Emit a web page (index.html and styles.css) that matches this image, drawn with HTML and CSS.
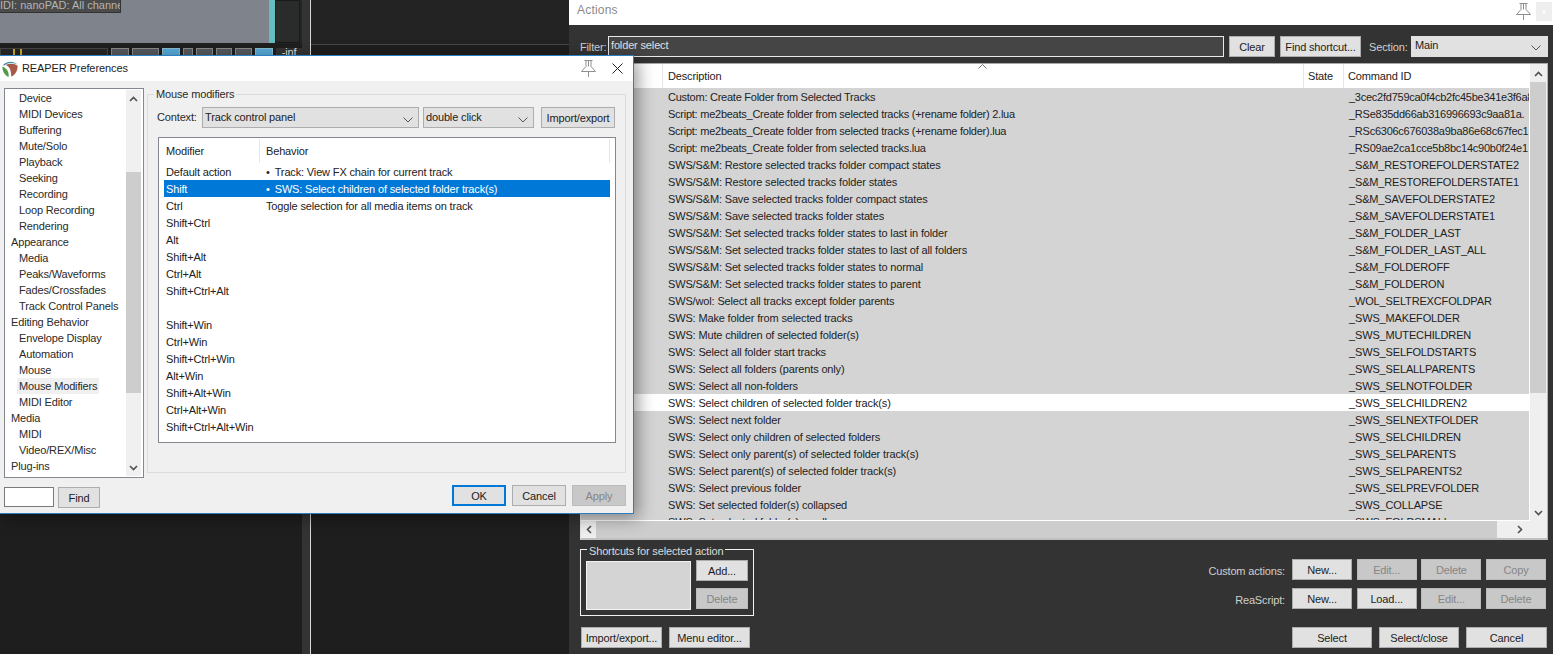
FILE: index.html
```html
<!DOCTYPE html>
<html lang="en">
<head>
<meta charset="utf-8">
<title>REAPER</title>
<link rel="stylesheet" href="styles.css">
</head>
<body>
<div class="daw">
  <div class="daw-left">
    <div class="track">
      <div class="track-lane"><span class="track-label">IDI: nanoPAD: All channe</span></div>
      <div class="track-teal"></div>
      <div class="track-meter"></div>
    </div>
    <div class="track-controls">
      <div class="tc-name"><i></i><i></i></div>
      <div class="tc-btn w17"></div>
      <div class="tc-btn w27"></div>
      <div class="tc-btn w17 blue"></div>
      <div class="tc-btn w11"></div>
      <div class="tc-btn w18"></div>
      <div class="tc-btn w18"></div>
      <div class="tc-btn w18"></div>
      <div class="tc-btn w17 blue"></div>
      <div class="tc-inf">-inf</div>
    </div>
  </div>
  <div class="daw-stripe"></div>
  <div class="daw-right"><div class="daw-top"></div></div>
</div>

<section class="actions">
  <header class="actions-title">
    <span>Actions</span>
    <svg class="pin" viewBox="0 0 15 17"><path d="M3.5 .5H11.5M5 .5V6.5M10 .5V6.5M7.5 .5V6.5M5 6.5L.5 11.5H14.5L10 6.5M7.5 11.5V17"/></svg>
    <div class="actions-close"><svg viewBox="0 0 6 6"><path d="M1 1L5 5M5 1L1 5"/></svg></div>
  </header>
  <div class="filter-row">
    <label class="lbl filter-lbl">Filter:</label>
    <div class="filter-input">folder select</div>
    <button class="btn clear">Clear</button>
    <button class="btn find-sc">Find shortcut...</button>
    <label class="lbl section-lbl">Section:</label>
    <div class="section-select"><span>Main</span><svg class="chev" viewBox="0 0 10 6"><path d="M.5 .5L5 5L9.5 .5"/></svg></div>
  </div>
  <div class="list">
    <div class="list-main">
      <div class="list-head">
        <div class="col-a"></div>
        <div class="col-b">Description<svg class="sort" viewBox="0 0 9 5"><path d="M.5 4.5L4.5 .5L8.5 4.5"/></svg></div>
        <div class="col-c">State</div>
        <div class="col-d">Command ID</div>
      </div>
      <div class="list-body">
        <div class="row tight"><div></div><div>Custom: Create Folder from Selected Tracks</div><div></div><div>_3cec2fd759ca0f4cb2fc45be341e3f6a8</div></div>
        <div class="row tight"><div></div><div>Script: me2beats_Create folder from selected tracks (+rename folder) 2.lua</div><div></div><div>_RSe835dd66ab316996693c9aa81a.</div></div>
        <div class="row tight"><div></div><div>Script: me2beats_Create folder from selected tracks (+rename folder).lua</div><div></div><div>_RSc6306c676038a9ba86e68c67fec1</div></div>
        <div class="row tight"><div></div><div>Script: me2beats_Create folder from selected tracks.lua</div><div></div><div>_RS09ae2ca1cce5b8bc14c90b0f24e1</div></div>
        <div class="row"><div></div><div>SWS/S&amp;M: Restore selected tracks folder compact states</div><div></div><div>_S&amp;M_RESTOREFOLDERSTATE2</div></div>
        <div class="row"><div></div><div>SWS/S&amp;M: Restore selected tracks folder states</div><div></div><div>_S&amp;M_RESTOREFOLDERSTATE1</div></div>
        <div class="row"><div></div><div>SWS/S&amp;M: Save selected tracks folder compact states</div><div></div><div>_S&amp;M_SAVEFOLDERSTATE2</div></div>
        <div class="row"><div></div><div>SWS/S&amp;M: Save selected tracks folder states</div><div></div><div>_S&amp;M_SAVEFOLDERSTATE1</div></div>
        <div class="row"><div></div><div>SWS/S&amp;M: Set selected tracks folder states to last in folder</div><div></div><div>_S&amp;M_FOLDER_LAST</div></div>
        <div class="row"><div></div><div>SWS/S&amp;M: Set selected tracks folder states to last of all folders</div><div></div><div>_S&amp;M_FOLDER_LAST_ALL</div></div>
        <div class="row"><div></div><div>SWS/S&amp;M: Set selected tracks folder states to normal</div><div></div><div>_S&amp;M_FOLDEROFF</div></div>
        <div class="row"><div></div><div>SWS/S&amp;M: Set selected tracks folder states to parent</div><div></div><div>_S&amp;M_FOLDERON</div></div>
        <div class="row"><div></div><div>SWS/wol: Select all tracks except folder parents</div><div></div><div>_WOL_SELTREXCFOLDPAR</div></div>
        <div class="row"><div></div><div>SWS: Make folder from selected tracks</div><div></div><div>_SWS_MAKEFOLDER</div></div>
        <div class="row"><div></div><div>SWS: Mute children of selected folder(s)</div><div></div><div>_SWS_MUTECHILDREN</div></div>
        <div class="row"><div></div><div>SWS: Select all folder start tracks</div><div></div><div>_SWS_SELFOLDSTARTS</div></div>
        <div class="row"><div></div><div>SWS: Select all folders (parents only)</div><div></div><div>_SWS_SELALLPARENTS</div></div>
        <div class="row"><div></div><div>SWS: Select all non-folders</div><div></div><div>_SWS_SELNOTFOLDER</div></div>
        <div class="row sel"><div></div><div>SWS: Select children of selected folder track(s)</div><div></div><div>_SWS_SELCHILDREN2</div></div>
        <div class="row"><div></div><div>SWS: Select next folder</div><div></div><div>_SWS_SELNEXTFOLDER</div></div>
        <div class="row"><div></div><div>SWS: Select only children of selected folders</div><div></div><div>_SWS_SELCHILDREN</div></div>
        <div class="row"><div></div><div>SWS: Select only parent(s) of selected folder track(s)</div><div></div><div>_SWS_SELPARENTS</div></div>
        <div class="row"><div></div><div>SWS: Select parent(s) of selected folder track(s)</div><div></div><div>_SWS_SELPARENTS2</div></div>
        <div class="row"><div></div><div>SWS: Select previous folder</div><div></div><div>_SWS_SELPREVFOLDER</div></div>
        <div class="row"><div></div><div>SWS: Set selected folder(s) collapsed</div><div></div><div>_SWS_COLLAPSE</div></div>
        <div class="row"><div></div><div>SWS: Set selected folder(s) small</div><div></div><div>_SWS_FOLDSMALL</div></div>
      </div>
    </div>
    <div class="vscroll">
      <svg class="arrow" viewBox="0 0 9 6"><path d="M1 5L4.5 1.5L8 5"/></svg>
      <div class="vthumb"></div>
      <svg class="arrow arrow-end" viewBox="0 0 9 6"><path d="M1 1L4.5 4.5L8 1"/></svg>
    </div>
    <div class="hscroll">
      <svg class="arrow-h" viewBox="0 0 6 9"><path d="M5 1L1.5 4.5L5 8"/></svg>
      <div class="hthumb"></div>
      <svg class="arrow-h" viewBox="0 0 6 9"><path d="M1 1L4.5 4.5L1 8"/></svg>
    </div>
  </div>
  <div class="bottom">
    <div class="bottom-left">
      <fieldset class="shortcuts">
        <legend>Shortcuts for selected action</legend>
        <div class="sc-inner">
          <div class="sc-list"></div>
          <div class="sc-btns">
            <button class="btn">Add...</button>
            <button class="btn off">Delete</button>
          </div>
        </div>
      </fieldset>
      <div class="tools">
        <button class="btn tool">Import/export...</button>
        <button class="btn tool">Menu editor...</button>
      </div>
    </div>
    <div class="bottom-right">
      <div class="act-row">
        <label class="lbl">Custom actions:</label>
        <button class="btn">New...</button>
        <button class="btn off">Edit...</button>
        <button class="btn off">Delete</button>
        <button class="btn off">Copy</button>
      </div>
      <div class="act-row">
        <label class="lbl">ReaScript:</label>
        <button class="btn">New...</button>
        <button class="btn">Load...</button>
        <button class="btn off">Edit...</button>
        <button class="btn off">Delete</button>
      </div>
      <div class="final-row">
        <button class="btn">Select</button>
        <button class="btn">Select/close</button>
        <button class="btn wide">Cancel</button>
      </div>
    </div>
  </div>
</section>

<section class="prefs">
  <header class="prefs-title">
    <svg class="logo" viewBox="0 0 16 16">
      <path class="l-green" d="M.4 5.5C.2 10 2.5 14.2 6.6 16C7 12 6 8 .4 5.5Z"/>
      <path class="l-red" d="M3.6 4.2C7 4.8 9 8 9.4 15.8C13 14 15.8 10 15.6 4.8C12 2.2 7 2.4 3.6 4.2Z"/>
      <path class="l-teal" d="M.8 4.2C4 .2 11.5-.8 15.4 3.6C11.5 1.6 6.5 1.4 2.8 4.2Z"/>
    </svg>
    <span class="prefs-name">REAPER Preferences</span>
    <svg class="pin prefs-pin" viewBox="0 0 15 17"><path d="M3.5 .5H11.5M5 .5V6.5M10 .5V6.5M7.5 .5V6.5M5 6.5L.5 11.5H14.5L10 6.5M7.5 11.5V17"/></svg>
    <svg class="prefs-x" viewBox="0 0 11 11"><path d="M.5 .5L10.5 10.5M10.5 .5L.5 10.5"/></svg>
  </header>
  <div class="prefs-body">
    <div class="prefs-main">
      <div class="tree">
        <ul class="tree-items">
          <li class="sub">Device</li>
          <li class="sub">MIDI Devices</li>
          <li class="sub">Buffering</li>
          <li class="sub">Mute/Solo</li>
          <li class="sub">Playback</li>
          <li class="sub">Seeking</li>
          <li class="sub">Recording</li>
          <li class="sub">Loop Recording</li>
          <li class="sub">Rendering</li>
          <li>Appearance</li>
          <li class="sub">Media</li>
          <li class="sub">Peaks/Waveforms</li>
          <li class="sub">Fades/Crossfades</li>
          <li class="sub">Track Control Panels</li>
          <li>Editing Behavior</li>
          <li class="sub">Envelope Display</li>
          <li class="sub">Automation</li>
          <li class="sub">Mouse</li>
          <li class="sub"><span class="cur">Mouse Modifiers</span></li>
          <li class="sub">MIDI Editor</li>
          <li>Media</li>
          <li class="sub">MIDI</li>
          <li class="sub">Video/REX/Misc</li>
          <li>Plug-ins</li>
        </ul>
        <div class="tree-scroll">
          <svg class="arrow" viewBox="0 0 9 6"><path d="M1 5L4.5 1.5L8 5"/></svg>
          <div class="tree-track"><div class="tree-thumb"></div></div>
          <svg class="arrow" viewBox="0 0 9 6"><path d="M1 1L4.5 4.5L8 1"/></svg>
        </div>
      </div>
      <fieldset class="mm">
        <legend>Mouse modifiers</legend>
        <div class="ctx-row">
          <label>Context:</label>
          <div class="combo c1"><span>Track control panel</span><svg class="chev" viewBox="0 0 10 6"><path d="M.5 .5L5 5L9.5 .5"/></svg></div>
          <div class="combo c2"><span>double click</span><svg class="chev" viewBox="0 0 10 6"><path d="M.5 .5L5 5L9.5 .5"/></svg></div>
          <button class="btn imp">Import/export</button>
        </div>
        <div class="mods">
          <div class="mods-head"><div>Modifier</div><div class="beh">Behavior</div><div class="end"></div></div>
          <div class="mrow"><div>Default action</div><div><span class="bul">•</span>Track: View FX chain for current track</div></div>
          <div class="mrow on"><div>Shift</div><div><span class="bul">•</span>SWS: Select children of selected folder track(s)</div></div>
          <div class="mrow"><div>Ctrl</div><div>Toggle selection for all media items on track</div></div>
          <div class="mrow"><div>Shift+Ctrl</div><div></div></div>
          <div class="mrow"><div>Alt</div><div></div></div>
          <div class="mrow"><div>Shift+Alt</div><div></div></div>
          <div class="mrow"><div>Ctrl+Alt</div><div></div></div>
          <div class="mrow"><div>Shift+Ctrl+Alt</div><div></div></div>
          <div class="mrow"><div></div><div></div></div>
          <div class="mrow"><div>Shift+Win</div><div></div></div>
          <div class="mrow"><div>Ctrl+Win</div><div></div></div>
          <div class="mrow"><div>Shift+Ctrl+Win</div><div></div></div>
          <div class="mrow"><div>Alt+Win</div><div></div></div>
          <div class="mrow"><div>Shift+Alt+Win</div><div></div></div>
          <div class="mrow"><div>Ctrl+Alt+Win</div><div></div></div>
          <div class="mrow"><div>Shift+Ctrl+Alt+Win</div><div></div></div>
        </div>
      </fieldset>
    </div>
    <div class="prefs-foot">
      <div class="search"></div>
      <button class="btn find">Find</button>
      <button class="btn dlg ok">OK</button>
      <button class="btn dlg">Cancel</button>
      <button class="btn dlg off">Apply</button>
    </div>
  </div>
</section>
</body>
</html>
```
FILE: styles.css
```css
* { box-sizing: border-box; }
html, body { margin: 0; height: 100%; }
body {
  position: relative;
  width: 1553px;
  height: 654px;
  overflow: hidden;
  background: #1e1e1e;
  font: 11px/1 "Liberation Sans", Arial, sans-serif;
  letter-spacing: -.15px;
  color: #222;
}
ul { list-style: none; margin: 0; padding: 0; }

/* background DAW */
.daw { position: absolute; left: 0; top: 0; width: 570px; height: 654px; display: flex; }
.daw-left { width: 302px; }
.track { display: flex; height: 44px; border-bottom: 1px solid #222; background: #252525; }
.track-lane { width: 269px; background: #7f838c; }
.track-label {
  display: block; width: 121px; height: 13px;
  background: #4b4b4b; border: solid #333; border-width: 0 1px 1px 0;
  color: #b4b4b4; font-size: 11px; line-height: 11px; white-space: nowrap; overflow: hidden;
  letter-spacing: 0;
}
.track-teal { width: 6px; background: #66bdbd; }
.track-meter { width: 25px; background: #2a2c2c; border: 1px solid #1a1a1a; }
.track-controls { display: flex; gap: 3px; margin-top: 4px; height: 8px; }
.tc-name { width: 109px; height: 8px; background: #262626; border: 1px solid #444; display: flex; gap: 5px; padding-left: 12px; }
.tc-name i { width: 2px; height: 6px; background: #c9a92e; }
.tc-btn { background: #55585c; border: 1px solid #888; height: 8px; }
.w17 { width: 18px; } .w27 { width: 27px; } .w11 { width: 10px; } .w18 { width: 17px; }
.tc-btn.blue { background: #58a9d6; border-color: #8bc; }
.tc-inf { width: 26px; height: 8px; background: #333; color: #ddd; font-size: 11px; line-height: 8px; text-align: center; overflow: hidden; }
.daw-stripe { width: 8px; background: #333; }
.daw-right { flex: 1; border-left: 1px solid #d8d8d8; }
.daw-top { height: 45px; background: #232323; border-bottom: 1px solid #454545; }

/* actions window */
.actions {
  position: absolute; left: 569px; top: 0; width: 984px; height: 654px;
  background: #333; display: flex; flex-direction: column;
}
.actions-title {
  height: 25px; flex: none; background: #fff; color: #8b8b8b;
  display: flex; align-items: flex-start; padding: 4px 1px 0 8px; font-size: 12px;
}
.actions-title span { flex: 1; letter-spacing: .2px; }
.pin { width: 15px; height: 17px; fill: none; stroke: #8f8f8f; stroke-width: 1; display: block; }
.actions-title .pin { margin: -1px 5px 0 0; }
.actions-close { width: 16px; height: 19px; margin-top: -2px; background: #eee; display: flex; align-items: center; justify-content: center; }
.actions-close svg { width: 6px; height: 6px; fill: none; stroke: #fff; }

.btn {
  display: block; margin: 0; padding: 1px 0 0; height: 21px;
  background: #e1e1e1; border: 1px solid #adadad; border-radius: 0;
  font: 11px/1 "Liberation Sans", Arial, sans-serif; letter-spacing: inherit;
  color: #1c1c1c; text-align: center; white-space: nowrap; overflow: hidden;
}
.btn.off { background: #c8c8c8; border-color: #bcbcbc; color: #868686; }
.lbl { color: #d8d8d8; white-space: nowrap; }

.filter-row { display: flex; align-items: flex-start; height: 21px; margin-top: 11px; padding-left: 11px; flex: none; }
.filter-lbl { width: 28px; padding-top: 6px; color: #d0d0d0; }
.filter-input { width: 616px; height: 21px; background: #454545; border: 1px solid #e8e8e8; color: #e0e0e0; padding: 3px 0 0 2px; }
.clear { width: 46px; margin-left: 5px; }
.find-sc { width: 81px; margin-left: 5px; }
.section-lbl { width: 42px; margin-left: 8px; padding-top: 6px; color: #cfcfcf; }
.section-select { width: 137px; height: 21px; background: #e1e1e1; display: flex; justify-content: space-between; padding: 4px 7px 0 4px; }
.chev { width: 10px; height: 6px; margin-top: 5px; fill: none; stroke: #555; display: block; flex: none; }

.list {
  margin: 6px 0 0 11px; width: 968px; height: 477px; flex: none;
  border: 1px solid #e4e4e4; border-right-color: #b4b4b4; border-bottom: 2px solid #c0c0c0; border-top-color: #a8a8a8;
  display: grid; grid-template-columns: 949px 17px; grid-template-rows: 457px 17px;
  background: #efefef;
}
.list-main { overflow: hidden; display: flex; flex-direction: column; background: #d4d4d4; border-right: 1px solid #fff; border-bottom: 1px solid #fff; }
.list-head { display: grid; grid-template-columns: 81px 641px 40px 187px; height: 24px; flex: none; background: #fff; }
.list-head > div { position: relative; padding: 7px 0 0 5px; border-left: 1px solid #e6e6e6; }
.list-head .col-a { border-left: 0; }
.list-head .col-c, .list-head .col-d { padding-left: 4px; }
.sort { position: absolute; left: 315px; top: 0; width: 9px; height: 5px; fill: none; stroke: #777; }
.row { display: grid; grid-template-columns: 81px 641px 40px 187px; height: 17px; line-height: 19px; white-space: nowrap; color: #222; }
.row > div { overflow: hidden; padding-left: 6px; }
.row > div:first-child { padding: 0; }
.row.sel { background: #fff; }
.row.tight { letter-spacing: -.25px; }

.vscroll { display: flex; flex-direction: column; background: #efefef; padding-top: 2px; padding-right: 1px; }
.arrow { width: 9px; height: 6px; margin: 5px auto; fill: none; stroke: #505050; stroke-width: 1.6; display: block; flex: none; }
.vthumb { height: 311px; flex: none; background: #cdcdcd; }
.arrow-end { margin-top: auto; margin-bottom: 5px; }
.hscroll { grid-column: 1 / 3; display: flex; align-items: center; background: #efefef; }
.arrow-h { width: 6px; height: 9px; margin: 0 5px; fill: none; stroke: #505050; stroke-width: 1.6; flex: none; }
.hthumb { width: 901px; height: 100%; background: #cdcdcd; margin-left: -1px; }
.hscroll .arrow-h:last-child { margin-left: 20px; }

.bottom { flex: 1; display: flex; justify-content: space-between; padding: 0 7px 0 12px; }
.bottom-left { width: 174px; margin-left: -1px; }
.shortcuts { margin: 4px 0 0; padding: 0 5px; height: 72px; border: 1px solid #f2f2f2; min-width: 0; color: #dcdcdc; }
.shortcuts legend { position: relative; top: 2px; padding: 0 2px; margin-left: 1px; line-height: 11px; white-space: nowrap; }
.sc-inner { display: flex; justify-content: space-between; margin-top: 5px; }
.sc-list { width: 105px; height: 49px; margin-top: 1px; background: #d4d4d4; border: 1px solid #f2f2f2; }
.sc-btns { width: 52px; display: flex; flex-direction: column; gap: 7px; }
.tools { display: flex; gap: 7px; margin: 11px 0 0 1px; }
.tool { width: 81px; }
.bottom-right { padding-top: 19px; width: 420px; }
.act-row { display: grid; grid-template-columns: repeat(4, 60px); column-gap: 4.67px; justify-content: end; margin-bottom: 8px; position: relative; }
.act-row .lbl { position: absolute; right: 261px; top: 7px; color: #cfcfcf; }
.final-row { display: flex; gap: 7px; justify-content: flex-end; margin-top: 18px; margin-right: -1px; }
.final-row .btn { width: 80px; }
.final-row .btn.wide { width: 81px; }

/* preferences */
.prefs {
  position: absolute; left: -1px; top: 55px; width: 635px; height: 459px;
  background: #f0f0f0; border: 1px solid #2a7fc2;
  box-shadow: 4px 4px 16px rgba(0,0,0,.4);
  display: flex; flex-direction: column;
}
.prefs-title { height: 25px; background: #fff; display: flex; align-items: center; flex: none; padding-left: 2px; }
.logo { width: 16px; height: 16px; flex: none; margin-top: 1px; }
.l-green { fill: #4f9a48; } .l-red { fill: #a85a48; } .l-teal { fill: #3f93a8; }
.prefs-name { flex: 1; margin-left: 4px; letter-spacing: -.1px; color: #222; }
.prefs-pin { margin: 0 16px 0 0; }
.prefs-x { width: 11px; height: 11px; fill: none; stroke: #222; margin-right: 10px; }

.prefs-body { flex: 1; display: flex; flex-direction: column; }
.prefs-main { display: flex; align-items: flex-start; padding-left: 4px; }
.tree {
  width: 140px; height: 390px; margin-top: 7px; background: #fff;
  border: 1px solid #828790; display: flex; padding: 1px 2px 1px 0;
}
.tree-items { flex: 1; color: #2a2a2a; }
.tree-items li { height: 16px; line-height: 16px; padding-left: 6px; white-space: nowrap; }
.tree-items li.sub { padding-left: 14px; }
.cur { display: inline-block; background: #f0f0f0; margin-left: -2px; padding: 0 2px; }
.tree-scroll { width: 15px; flex: none; background: #f0f0f0; display: flex; flex-direction: column; }
.tree-track { flex: 1; }
.tree-thumb { height: 221px; margin-top: 65px; background: #cdcdcd; }
.tree-scroll .arrow { margin: 6px auto 5px; }

.mm { margin: 8px 0 0 3px; width: 479px; height: 384px; padding: 0 10px; border: 1px solid #dcdcdc; min-width: 0; }
.mm legend { padding: 0 2px; margin-left: -4px; line-height: 11px; color: #2a2a2a; }
.ctx-row { display: flex; align-items: center; height: 22px; margin-top: 6px; }
.ctx-row label { width: 45px; margin-left: -1px; color: #2a2a2a; }
.combo { height: 21px; background: #e1e1e1; border: 1px solid #adadad; display: flex; justify-content: space-between; padding: 4px 5px 0 2px; white-space: nowrap; }
.c1 { width: 217px; } .c2 { width: 111px; margin-left: 4px; }
.imp { width: 74px; margin-left: 7px; margin-top: 1px; }
.mods { margin-top: 9px; width: 458px; height: 306px; background: #fff; border: 1px solid #828790; padding: 1px 5px 0; }
.mods-head { display: flex; height: 24px; }
.mods-head > div { padding: 7px 0 0 2px; width: 95px; }
.mods-head .beh { flex: 1; border-left: 1px solid #e6e6e6; padding-left: 6px; }
.mods-head .end { width: 1px; padding: 0; border-right: 1px solid #e6e6e6; }
.mrow { display: grid; grid-template-columns: 96px 1fr; height: 17px; line-height: 19px; white-space: nowrap; color: #222; width: 446px; }
.mrow > div { padding-left: 2px; overflow: hidden; }
.mrow > div + div { padding-left: 6px; }
.mrow.on { background: #0078d7; color: #fff; }
.bul { margin-right: 5px; }

.prefs-foot { display: flex; align-items: flex-start; padding-left: 4px; margin-top: 7px; }
.search { width: 50px; height: 20px; margin-top: 2px; background: #fff; border: 1px solid #7a7a7a; }
.find { width: 42px; margin: 2px 0 0 4px; }
.dlg { width: 54px; margin-left: 6px; }
.find + .dlg { margin-left: 352px; }
.ok { border: 2px solid #0078d7; }
```
